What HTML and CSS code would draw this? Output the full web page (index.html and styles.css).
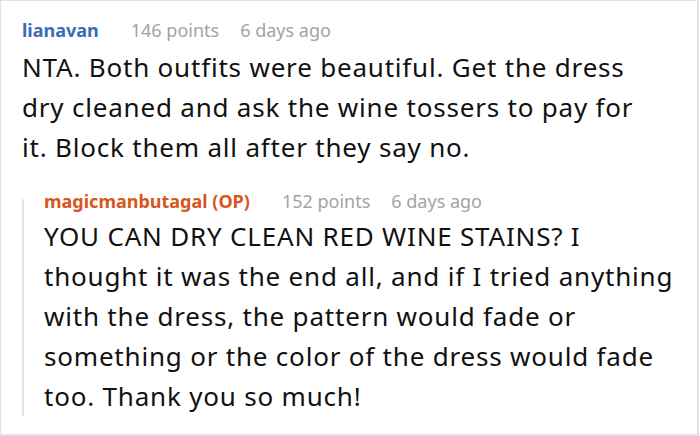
FILE: index.html
```html
<!DOCTYPE html>
<html>
<head>
<meta charset="utf-8">
<link rel="stylesheet" href="styles.css">
</head>
<body>
<div class="frame">
  <div class="comment">
    <div class="meta">
      <span class="author">lianavan</span>
      <span class="info">146 points</span>
      <span class="info">6 days ago</span>
    </div>
    <p class="body">NTA. Both outfits were beautiful. Get the dress<br>dry cleaned and ask the wine tossers to pay for<br>it. Block them all after they say no.</p>
    <div class="reply">
      <div class="thread-line"></div>
      <div class="reply-content">
        <div class="meta">
          <span class="author op">magicmanbutagal (OP)</span>
          <span class="info">152 points</span>
          <span class="info">6 days ago</span>
        </div>
        <p class="body">YOU CAN DRY CLEAN RED WINE STAINS? I<br>thought it was the end all, and if I tried anything<br>with the dress, the pattern would fade or<br>something or the color of the dress would fade<br>too. Thank you so much!</p>
      </div>
    </div>
  </div>
</div>
</body>
</html>
```
FILE: styles.css
```css
html, body {
  margin: 0;
  padding: 0;
  background: #fff;
}
.frame {
  box-sizing: border-box;
  width: 699px;
  height: 436px;
  border: 1px solid #e2e2e2;
  border-right-width: 2px;
  border-bottom-width: 2px;
  overflow: hidden;
  font-family: "Noto Sans", "Open Sans", sans-serif;
}
.comment {
  padding: 16px 0 0 21px;
}
.meta {
  display: flex;
  gap: 21px;
  font-size: 18px;
  line-height: 26px;
  color: #a3a3a3;
}
.author {
  font-weight: bold;
  color: #3a6db5;
  margin-right: 11px;
}
.author.op {
  color: #d6561c;
}
.body {
  margin: 4px 0 0;
  font-size: 26px;
  letter-spacing: 0.8px;
  line-height: 40px;
  color: #111;
  white-space: nowrap;
}
.reply {
  display: flex;
  margin-top: 21px;
}
.thread-line {
  flex: 0 0 2px;
  background: #e6e6e6;
  margin-top: 11px;
  margin-right: 20px;
}
.reply-content {
  flex: 1;
}
.reply .body {
  margin-top: 2px;
}
```
